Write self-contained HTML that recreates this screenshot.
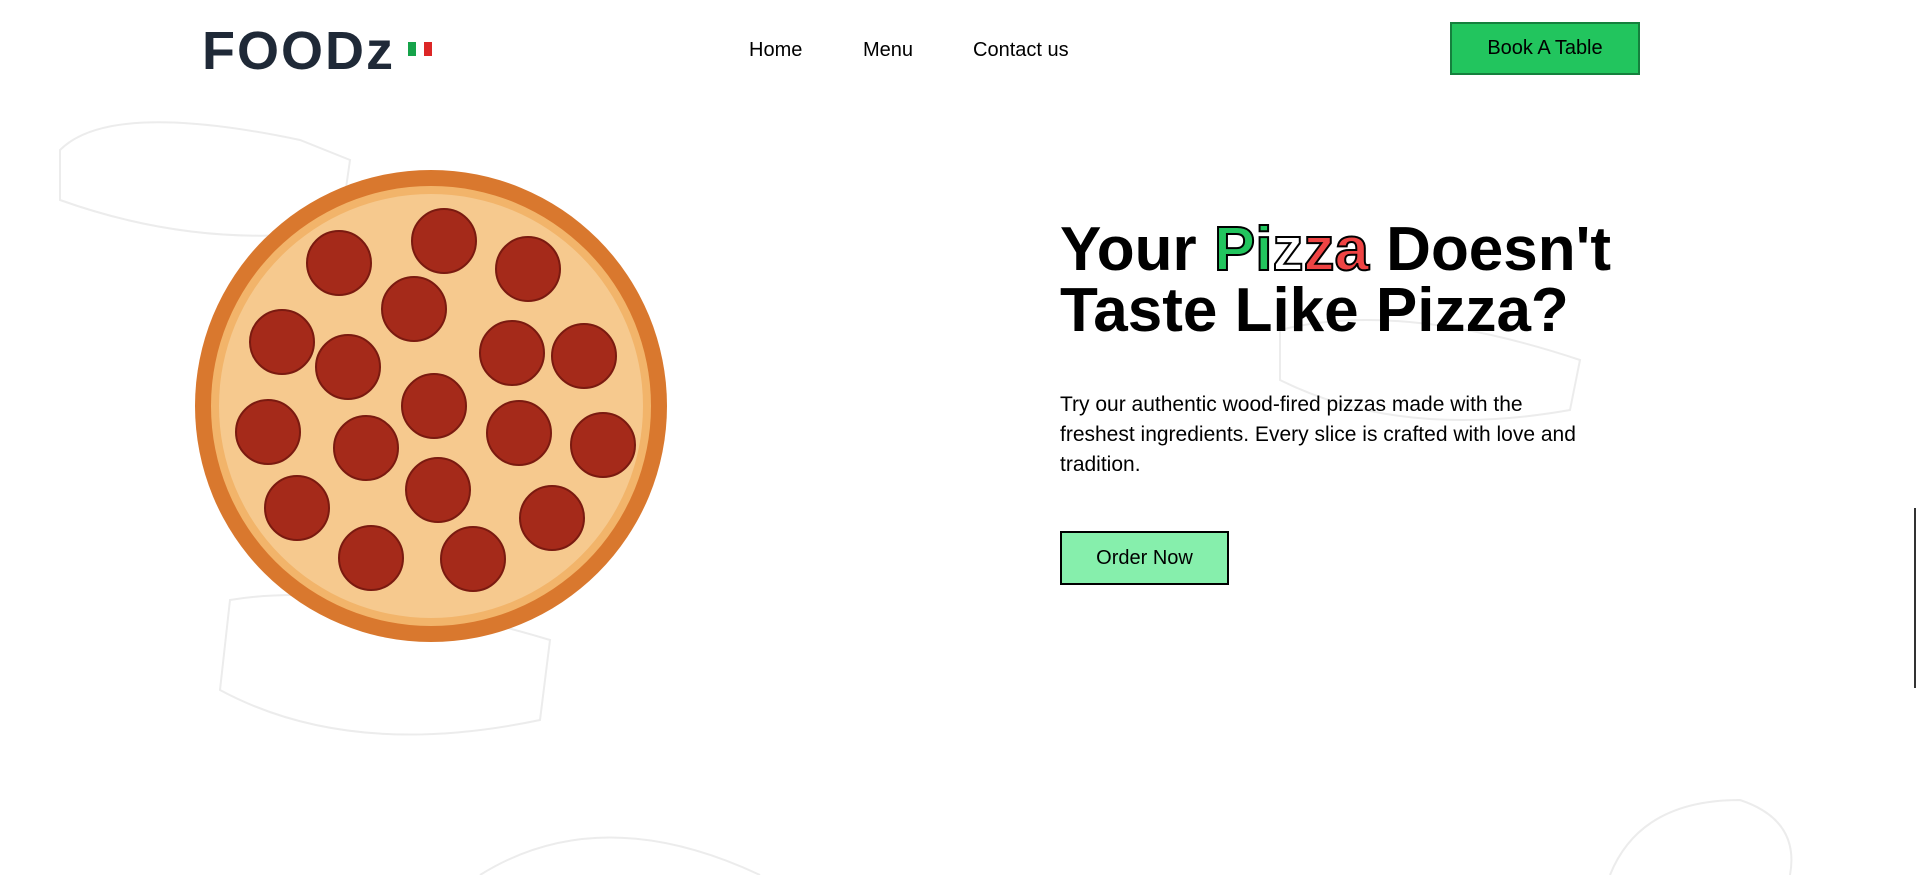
<!DOCTYPE html>
<html><head><meta charset="utf-8"><style>
*{margin:0;padding:0;box-sizing:border-box}
body{width:1919px;height:875px;overflow:hidden;background:#fff;font-family:"Liberation Sans",sans-serif;position:relative;color:#000}
.logo{position:absolute;left:202px;top:20px;font-size:54px;font-weight:bold;color:#1f2937;letter-spacing:2px}
.flag{position:absolute;left:408px;top:42px;width:24px;height:14px;display:flex}
.flag i{flex:1}
.nav{position:absolute;top:39px;font-size:20px;color:#000}
.btn{position:absolute;left:1450px;top:22px;width:190px;height:53px;background:#22c55e;border:2px solid #15803d;font-size:20px;display:flex;align-items:center;justify-content:center}
h1{position:absolute;left:1060px;top:219px;font-size:62px;line-height:61px;font-weight:bold}
.g{color:#22c55e;-webkit-text-stroke:2px #000}
.w{color:#fff;-webkit-text-stroke:2px #000}
.r{color:#ef4444;-webkit-text-stroke:2px #000}
p{position:absolute;left:1060px;top:390px;width:548px;font-size:21px;line-height:30px}
.order{position:absolute;left:1060px;top:531px;width:169px;height:54px;background:#86efac;border:2px solid #000;font-size:20px;display:flex;align-items:center;justify-content:center}
.sb{position:absolute;left:1914px;top:508px;width:2px;height:180px;background:#333}
</style></head><body>
<svg style="position:absolute;left:0;top:0" width="1919" height="875">
<g fill="none" stroke="#ececec" stroke-width="2">
<path d="M60 150 Q110 100 300 140 L350 160 L340 230 Q200 250 60 200 Z"/>
<path d="M1280 330 Q1400 300 1580 360 L1570 410 Q1400 440 1280 380 Z"/>
<path d="M230 600 Q350 580 550 640 L540 720 Q350 760 220 690 Z"/>
<path d="M480 875 Q600 800 760 875"/>
<path d="M1610 875 Q1640 800 1740 800 Q1800 820 1790 875"/>
</g>
<circle cx="431" cy="406" r="236" fill="#d9782e"/>
<circle cx="431" cy="406" r="220" fill="#f2b46a"/>
<circle cx="431" cy="406" r="212" fill="#f6c98e"/>
<g fill="#a52a1a" stroke="#7a1a10" stroke-width="2">
<circle cx="339" cy="263" r="32"/><circle cx="444" cy="241" r="32"/><circle cx="528" cy="269" r="32"/>
<circle cx="414" cy="309" r="32"/><circle cx="282" cy="342" r="32"/><circle cx="348" cy="367" r="32"/>
<circle cx="512" cy="353" r="32"/><circle cx="584" cy="356" r="32"/><circle cx="434" cy="406" r="32"/>
<circle cx="268" cy="432" r="32"/><circle cx="366" cy="448" r="32"/><circle cx="519" cy="433" r="32"/>
<circle cx="603" cy="445" r="32"/><circle cx="297" cy="508" r="32"/><circle cx="438" cy="490" r="32"/>
<circle cx="552" cy="518" r="32"/><circle cx="371" cy="558" r="32"/><circle cx="473" cy="559" r="32"/>
</g>
</svg>
<div class="logo">FOODz</div>
<div class="flag"><i style="background:#16a34a"></i><i style="background:#fff"></i><i style="background:#dc2626"></i></div>
<div class="nav" style="left:749px">Home</div>
<div class="nav" style="left:863px">Menu</div>
<div class="nav" style="left:973px">Contact us</div>
<div class="btn">Book A Table</div>
<h1>Your <span class="g">Pi</span><span class="w">z</span><span class="r">za</span> Doesn't<br>Taste Like Pizza?</h1>
<p>Try our authentic wood-fired pizzas made with the<br>freshest ingredients. Every slice is crafted with love and<br>tradition.</p>
<div class="order">Order Now</div>
<div class="sb"></div>
</body></html>
